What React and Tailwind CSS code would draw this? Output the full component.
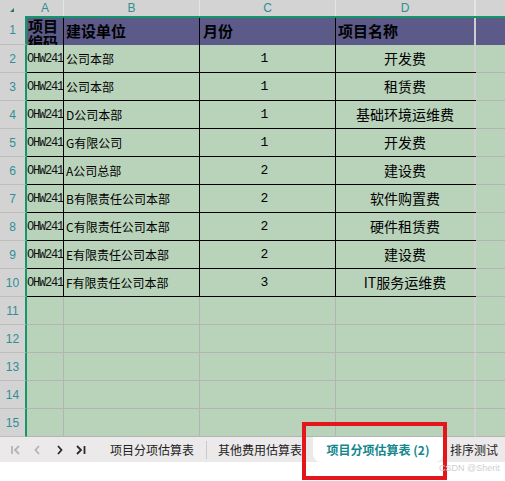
import React from "react";

const rows = [
  ["公司本部", "1", "开发费"],
  ["公司本部", "1", "租赁费"],
  ["D公司本部", "1", "基础环境运维费"],
  ["G有限公司", "1", "开发费"],
  ["A公司总部", "2", "建设费"],
  ["B有限责任公司本部", "2", "软件购置费"],
  ["C有限责任公司本部", "2", "硬件租赁费"],
  ["E有限责任公司本部", "2", "建设费"],
  ["F有限责任公司本部", "3", "IT服务运维费"],
];

const cjk = { fontFamily: '"Noto Sans CJK SC", "Noto Sans", sans-serif' };
const mono = { fontFamily: '"Liberation Mono", "DejaVu Sans Mono", monospace' };

function RowHead({ n }) {
  return (
    <div
      className="w-[27px] shrink-0 flex items-center justify-center border-r-2 border-r-[#14966b] border-b border-b-[#bdbdbd] bg-[#d3d3d3] text-[12px] text-[#2f8f93]"
      style={{ fontFamily: '"Liberation Sans", Arial, sans-serif' }}
    >
      {n}
    </div>
  );
}

function NavArrow({ d, light, w }) {
  return (
    <svg width={w} height="10" viewBox={`0 0 ${w} 10`} className="shrink-0">
      <path d={d} fill="none" stroke={light ? "#b4b4b4" : "#2b2b2b"} strokeWidth="1.8" />
    </svg>
  );
}

export default function App() {
  return (
    <div className="relative w-[505px] h-[481px] bg-white overflow-hidden" style={cjk}>
      {/* column letters */}
      <div className="flex h-[16px] bg-[#d3d3d3] text-[12px] text-[#2f8f93]" style={{ fontFamily: '"Liberation Sans", Arial, sans-serif' }}>
        <div className="w-[27px] shrink-0 relative">
          <svg width="27" height="16" className="absolute left-0 top-0">
            <polygon points="14,8 14,12 10,12" fill="#2c6f6f" />
          </svg>
        </div>
        <div className="w-[37px] shrink-0 flex items-center justify-center border-r border-[#e4e4e4]">A</div>
        <div className="w-[136px] shrink-0 flex items-center justify-center border-r border-[#e4e4e4]">B</div>
        <div className="w-[136px] shrink-0 flex items-center justify-center border-r border-[#e4e4e4]">C</div>
        <div className="w-[140px] shrink-0 flex items-center justify-center border-r-2 border-[#e4e4e4]">D</div>
        <div className="flex-1" />
      </div>

      {/* header row */}
      <div className="flex h-[29px]">
        <div className="w-[27px] shrink-0 flex items-center justify-center border-r-2 border-r-[#14966b] border-b border-b-[#bdbdbd] bg-[#d3d3d3] text-[12px] text-[#2f8f93]" style={{ fontFamily: '"Liberation Sans", Arial, sans-serif' }}>
          1
        </div>
        <div className="flex flex-1 border-t-2 border-[#14966b] bg-[#5b5a89] text-[15px] font-bold text-black">
          <div className="w-[37px] shrink-0 overflow-hidden border-r border-black pl-[1px] leading-[16px]">项目编码</div>
          <div className="w-[136px] shrink-0 flex items-center border-r border-black pl-[2px]">建设单位</div>
          <div className="w-[136px] shrink-0 flex items-center border-r border-black pl-[3px]">月份</div>
          <div className="w-[140px] shrink-0 flex items-center border-r-2 border-[#cfcfcf] pl-[2px]">项目名称</div>
          <div className="flex-1" />
        </div>
      </div>

      {/* data rows */}
      {rows.map((r, i) => (
        <div key={i} className="flex h-[28px]">
          <RowHead n={i + 2} />
          <div className="flex flex-1 bg-[#b9d3bb] text-black">
            <div className="w-[37px] shrink-0 flex items-center overflow-hidden whitespace-nowrap border-r border-b border-black text-[12px] tracking-[-1.2px] text-[#111]" style={mono}>
              OHW241
            </div>
            <div className="w-[136px] shrink-0 flex items-center whitespace-nowrap border-r border-b border-black pl-[2px] text-[12px]">
              {r[0]}
            </div>
            <div className="w-[136px] shrink-0 flex items-center justify-center border-r border-b border-black pr-[6px] text-[13px]" style={mono}>
              {r[1]}
            </div>
            <div className="w-[140px] shrink-0 flex items-center justify-center border-b border-black">
              <div className="flex-1 h-full flex items-center justify-center text-[14px]">{r[2]}</div>
              <div className="w-[2px] h-full bg-[#cfcfcf]" />
            </div>
            <div className="flex-1 border-b border-[#b4b4b4]" />
          </div>
        </div>
      ))}

      {/* empty rows */}
      {[11, 12, 13, 14, 15].map((n) => (
        <div key={n} className="flex h-[28px]">
          <RowHead n={n} />
          <div className="flex flex-1 bg-[#b9d3bb]">
            <div className="w-[37px] shrink-0 border-r border-b border-[#b4b4b4]" />
            <div className="w-[136px] shrink-0 border-r border-b border-[#b4b4b4]" />
            <div className="w-[136px] shrink-0 border-r border-b border-[#b4b4b4]" />
            <div className="w-[140px] shrink-0 border-r-2 border-r-[#cfcfcf] border-b border-b-[#b4b4b4]" />
            <div className="flex-1 border-b border-[#b4b4b4]" />
          </div>
        </div>
      ))}

      {/* sheet tabs */}
      <div className="flex h-[25px] items-center bg-[#ebe9e9] text-[12px] text-[#222]">
        <div className="w-[98px] shrink-0 flex items-center">
          <div className="ml-[11px]">
            <NavArrow w={9} light d="M1 1 V9 M8 1 L4 5 L8 9" />
          </div>
          <div className="ml-[14px]">
            <NavArrow w={6} light d="M5 1 L1.5 5 L5 9" />
          </div>
          <div className="ml-[17px]">
            <NavArrow w={6} d="M1 1 L4.5 5 L1 9" />
          </div>
          <div className="ml-[13px]">
            <NavArrow w={10} d="M1 1 L5 5 L1 9 M8.5 1 V9" />
          </div>
        </div>
        <div className="w-[108px] shrink-0 text-center">项目分项估算表</div>
        <div className="w-px h-[18px] bg-[#c9c9c9] shrink-0" />
        <div className="w-[106px] shrink-0 text-center whitespace-nowrap">其他费用估算表</div>
        <div className="w-[130px] h-full shrink-0 flex items-center justify-center rounded-b-[8px] bg-white font-bold text-[#13878c] whitespace-nowrap">
          项目分项估算表 (2)
        </div>
        <div className="pl-[7px] whitespace-nowrap">排序测试</div>
      </div>

      {/* highlight box */}
      <div className="absolute left-[302px] top-[422px] w-[145px] h-[58px] border-4 border-[#e3161b]" />

      <div className="absolute left-[439px] top-[462px] text-[9px] leading-[12px] text-[#cfcfcf] whitespace-nowrap" style={{ fontFamily: '"Liberation Sans", Arial, sans-serif' }}>
        CSDN @Sherit
      </div>
    </div>
  );
}
